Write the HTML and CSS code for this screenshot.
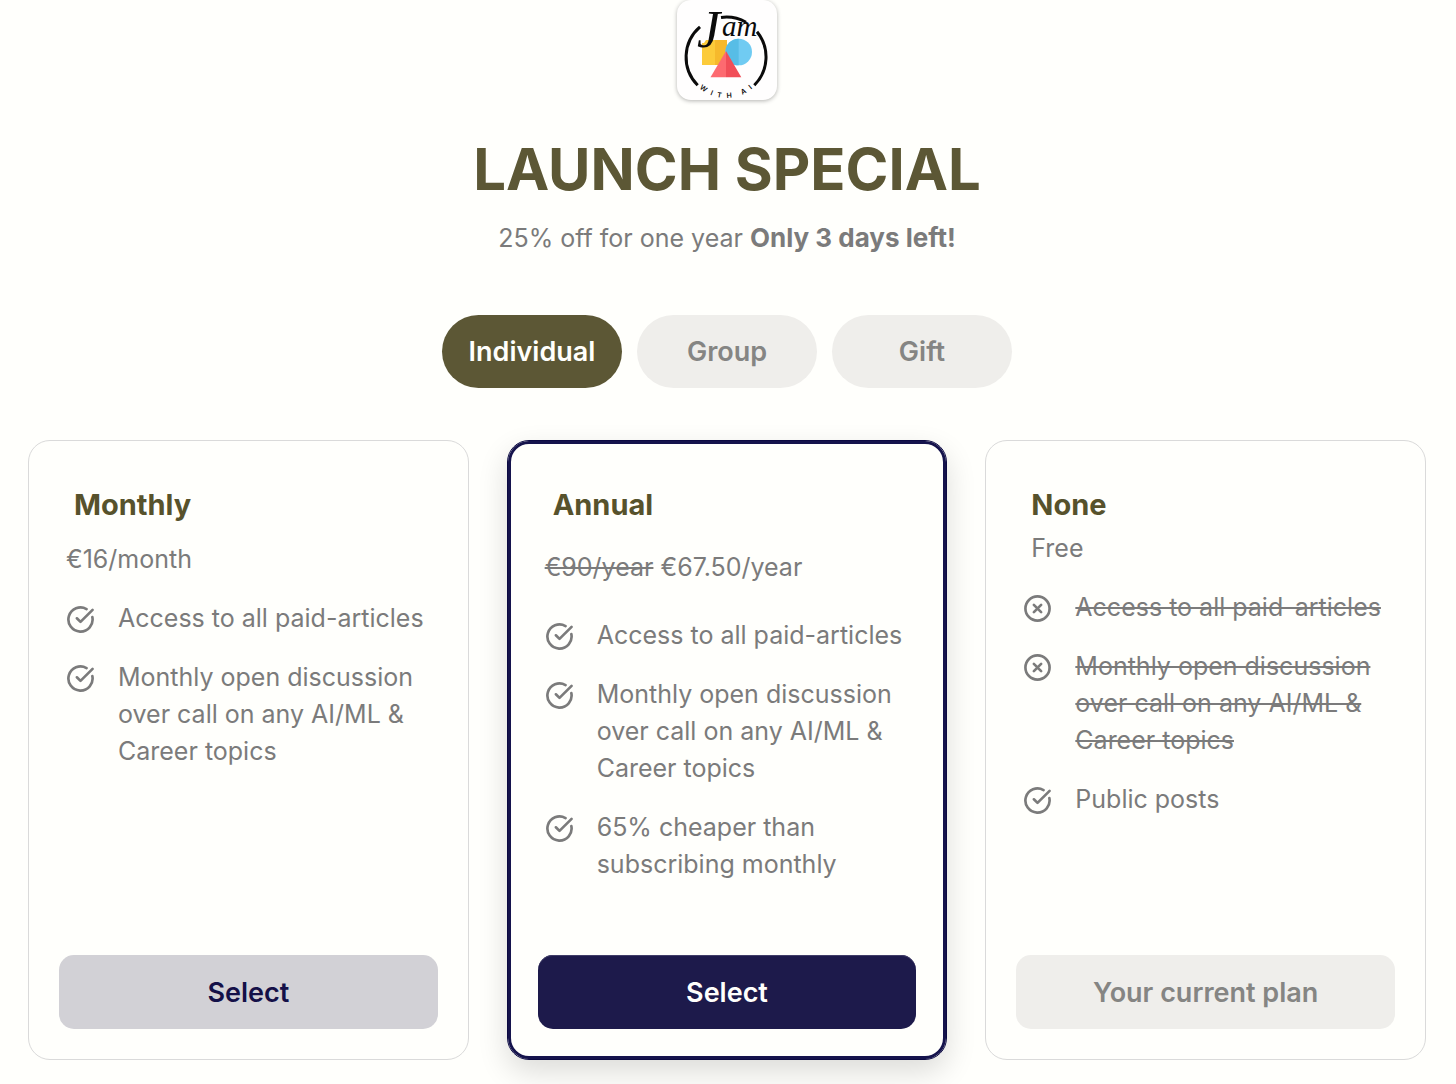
FILE: index.html
```html
<!DOCTYPE html>
<html lang="en">
<head>
    <meta charset="UTF-8">
    <meta name="viewport" content="width=device-width, initial-scale=1.0">
    <title>Jam with AI - Launch Special</title>
    <link rel="stylesheet" href="styles.css">
</head>
<body>
    <!-- shared icons -->
    <svg class="sprite" aria-hidden="true">
        <symbol id="icon-check" viewBox="0 0 24 24">
            <path d="M21.8 10A10 10 0 1 1 17 3.34"/>
            <path d="M9 11l3 3L22 4"/>
        </symbol>
        <symbol id="icon-cross" viewBox="0 0 24 24">
            <circle cx="12" cy="12" r="10"/>
            <path d="M15 9l-6 6M9 9l6 6"/>
        </symbol>
    </svg>

    <header class="header">
        <div class="logo">
            <svg viewBox="0 0 100 100" role="img" aria-label="Jam with AI">
                <path fill="#fccb3a" d="M27 43l2-3h9v25H25V43z"/>
                <path fill="#f6b92c" d="M38 40h12v25H38z"/>
                <circle fill="#70cbf2" cx="61.7" cy="52" r="13.3"/>
                <path fill="#57bde6" d="M61.7 38.7a13.3 13.3 0 0 0 0 26.6z"/>
                <path fill="#fd6a70" d="M49 51L33.5 77.3H49z"/>
                <path fill="#f14e58" d="M49 51l15.3 26.3H49z"/>
                <g fill="none" stroke="#0b0b0b" stroke-width="3">
                    <path d="M23 26.8A40 40 0 0 0 20.7 85.3"/>
                    <path d="M44 17.5A40 40 0 0 1 69 22.3"/>
                    <path d="M80 31.7A40 40 0 0 1 77.3 85.3"/>
                </g>
                <path id="logo-arc" fill="none" d="M8 57a41 41 0 0 0 82 0"/>
                <text class="logo-script"><tspan class="logo-initial" x="20" y="47">J</tspan><tspan x="45" y="36">am</tspan></text>
                <text class="logo-caption"><textPath href="#logo-arc" startOffset="50%" text-anchor="middle">W&#160;&#160;&#160;I&#160;&#160;&#160;T&#160;&#160;&#160;H&#160;&#160;&#160;&#160;&#160;&#160;A&#160;&#160;&#160;I</textPath></text>
            </svg>
        </div>
        <h1 class="title">LAUNCH SPECIAL</h1>
        <p class="subtitle">25% off for one year <strong>Only 3 days left!</strong></p>
    </header>

    <div class="tabs">
        <button type="button" class="tab active" aria-pressed="true">Individual</button>
        <button type="button" class="tab" aria-pressed="false">Group</button>
        <button type="button" class="tab" aria-pressed="false">Gift</button>
    </div>

    <main class="plans">
        <section class="plan">
            <h2>Monthly</h2>
            <p class="price">€16/month</p>
            <ul class="features">
                <li><svg class="icon" aria-hidden="true"><use href="#icon-check"/></svg><span>Access to all paid-articles</span></li>
                <li><svg class="icon" aria-hidden="true"><use href="#icon-check"/></svg><span>Monthly open discussion over call on any AI/ML &amp; Career topics</span></li>
            </ul>
            <button type="button" class="btn btn-secondary">Select</button>
        </section>

        <section class="plan plan-featured">
            <h2>Annual</h2>
            <p class="price"><s>€90/year</s> €67.50/year</p>
            <ul class="features">
                <li><svg class="icon" aria-hidden="true"><use href="#icon-check"/></svg><span>Access to all paid-articles</span></li>
                <li><svg class="icon" aria-hidden="true"><use href="#icon-check"/></svg><span>Monthly open discussion over call on any AI/ML &amp; Career topics</span></li>
                <li><svg class="icon" aria-hidden="true"><use href="#icon-check"/></svg><span>65% cheaper than subscribing monthly</span></li>
            </ul>
            <button type="button" class="btn btn-primary">Select</button>
        </section>

        <section class="plan plan-free">
            <h2>None</h2>
            <p class="price">Free</p>
            <ul class="features">
                <li><svg class="icon" aria-hidden="true"><use href="#icon-cross"/></svg><s>Access to all paid-articles</s></li>
                <li><svg class="icon" aria-hidden="true"><use href="#icon-cross"/></svg><s>Monthly open discussion over call on any AI/ML &amp; Career topics</s></li>
                <li><svg class="icon" aria-hidden="true"><use href="#icon-check"/></svg><span>Public posts</span></li>
            </ul>
            <button type="button" class="btn" disabled>Your current plan</button>
        </section>
    </main>
</body>
</html>
```

FILE: styles.css
```css
* {
    box-sizing: border-box;
}
body {
    margin: 0;
    padding: 0 30px 24px 28px;
    background: #fffffc;
    color: #7b7b7b;
    font-family: Inter, "Liberation Sans", sans-serif;
    font-size: 25px;
    line-height: 37px;
}
h1, h2, p, ul {
    margin: 0;
    padding: 0;
}
button {
    border: 0;
    font-family: inherit;
    font-size: 27px;
    font-weight: 600;
    line-height: 37px;
    background: #efeeeb;
    color: #858583;
}
.sprite {
    display: none;
}

.header {
    display: flex;
    flex-direction: column;
    align-items: center;
    text-align: center;
}
.logo {
    width: 100px;
    height: 100px;
    border-radius: 14px;
    background: #fffefe;
    box-shadow: 0 1px 4px rgba(0,0,0,0.3);
}
.logo svg {
    display: block;
    overflow: visible;
}
.logo-script {
    font-family: "Liberation Serif", serif;
    font-style: italic;
    font-size: 29px;
    fill: #0b0b0b;
}
.logo-initial {
    font-size: 52px;
}
.logo-caption {
    font-size: 7px;
    font-weight: 600;
    line-height: 8px;
    fill: #0b0b0b;
}
.title {
    margin-top: 34px;
    font-size: 58px;
    font-weight: 700;
    line-height: 70px;
    color: #5c5735;
}
.subtitle {
    margin-top: 15px;
}
.subtitle strong {
    font-size: 26px;
}

.tabs {
    display: flex;
    justify-content: center;
    gap: 15px;
    margin: 58px 0 52px;
}
.tab {
    width: 180px;
    padding: 18px 0;
    border-radius: 37px;
}
.tab.active {
    background: #5c5735;
    color: #fffffc;
}

.plans {
    display: grid;
    grid-template-columns: repeat(3, 1fr);
    gap: 38px;
}
.plan {
    display: flex;
    flex-direction: column;
    padding: 45px 30px 30px;
    border: 1px solid #dadada;
    border-radius: 22px;
}
.plan h2 {
    padding: 0 15px;
    font-size: 29px;
    font-weight: 700;
    line-height: 37px;
    color: #57522c;
}
.price {
    margin-top: 18px;
    padding: 0 7px;
}
.features {
    display: flex;
    flex-direction: column;
    gap: 22px;
    margin: 22px 0 72px;
    padding: 0 7px;
    list-style: none;
}
.features li {
    display: flex;
    gap: 23px;
}
.icon {
    flex: none;
    width: 29px;
    height: 29px;
    margin-top: 5px;
    fill: none;
    stroke: currentColor;
    stroke-width: 2.2;
    stroke-linecap: round;
    stroke-linejoin: round;
}
.plan-featured {
    border-color: #0c0a42;
    box-shadow: inset 0 0 0 3px #15134c, 0 12px 30px rgba(0,0,0,0.14);
}
.plan-featured .price {
    margin-top: 26px;
}
.plan-featured .features {
    margin-top: 31px;
}
.plan-free .price {
    margin-top: 7px;
    padding: 0 15px;
}

.btn {
    margin-top: auto;
    padding: 19px 0 18px;
    border-radius: 15px;
}
.btn-secondary {
    background: #d2d1d6;
    color: #141048;
}
.btn-primary {
    background: #1d1a4b;
    color: #fffffc;
    box-shadow: inset 0 1px 0 #403d68;
}
```
